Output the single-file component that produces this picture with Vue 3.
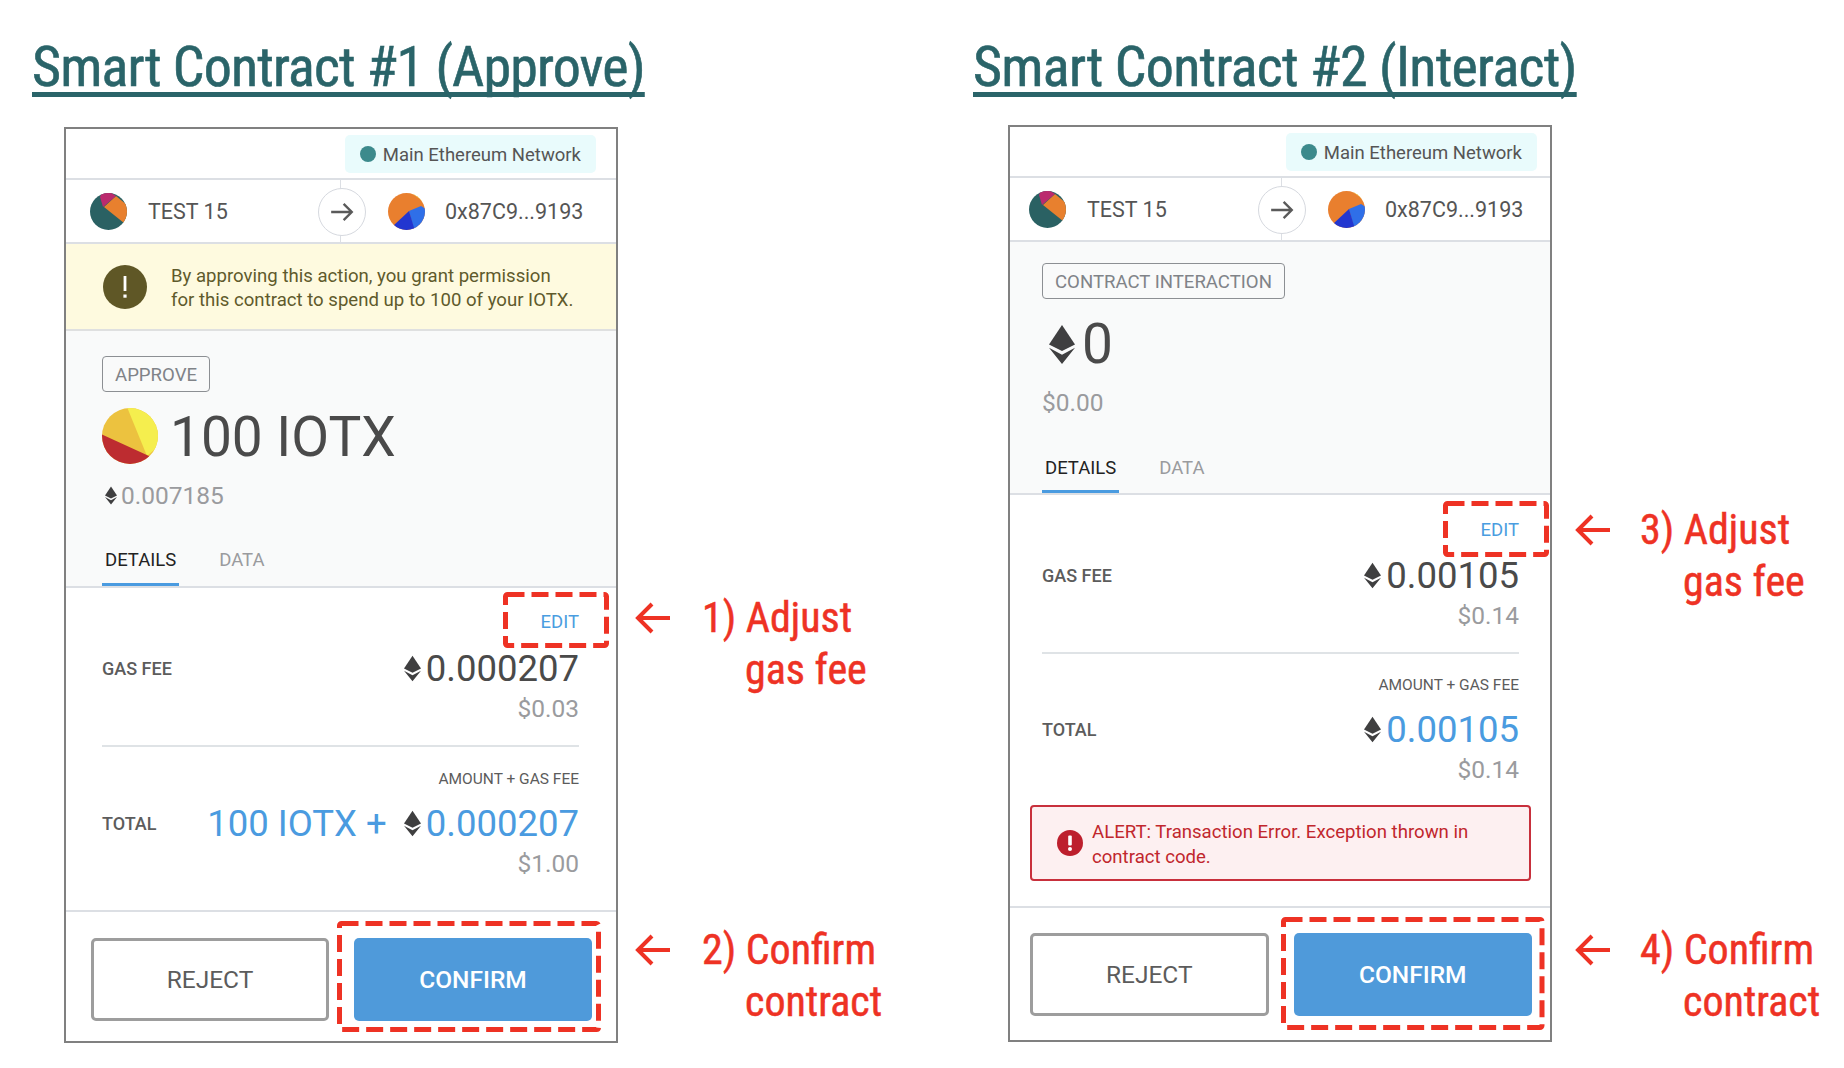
<template>
  <div class="page">
    <section v-for="c in cards" :key="c.id" class="col" :class="'col-' + c.id">
      <h1 class="heading">{{ c.heading }}</h1>

      <div class="card" :class="'card-' + c.id">
        <div class="net-row">
          <div class="net-pill"><span class="net-dot"></span>Main Ethereum Network</div>
        </div>

        <div class="acct-row">
          <svg class="avatar" viewBox="0 0 37 37">
            <defs><clipPath :id="'av1' + c.id"><circle cx="18.5" cy="18.5" r="18.5" /></clipPath></defs>
            <g :clip-path="`url(#av1${c.id})`">
              <rect width="37" height="37" fill="#2a6163" />
              <polygon points="14,14 26,3 37,12 37,25 34,30" fill="#e8802e" />
              <polygon points="10,4 13,14 26,3 20,-1 12,-1" fill="#bb2a6e" />
            </g>
          </svg>
          <span class="acct-name">TEST 15</span>
          <span class="arrow-btn">
            <svg viewBox="0 0 24 24" width="26" height="26" fill="none" stroke="#5a5a5a" stroke-width="2.2">
              <path d="M2 12h19M13.5 4.5 21 12l-7.5 7.5" />
            </svg>
          </span>
          <svg class="avatar avatar-to" viewBox="0 0 37 37">
            <defs><clipPath :id="'av2' + c.id"><circle cx="18.5" cy="18.5" r="18.5" /></clipPath></defs>
            <g :clip-path="`url(#av2${c.id})`">
              <rect width="37" height="37" fill="#e97f2e" />
              <polygon points="22,-1 37,-1 37,12 32,6" fill="#f2d53c" />
              <polygon points="21,18 33,13 38,16 38,26 30,37 26,37" fill="#2f6fe8" />
              <polygon points="5,33 21,18 27,38 12,38" fill="#2236d0" />
            </g>
          </svg>
          <span class="acct-addr">0x87C9...9193</span>
        </div>

        <div v-if="c.warning" class="banner">
          <svg class="banner-icon" viewBox="0 0 44 44">
            <circle cx="22" cy="22" r="22" fill="#5f5726" />
            <rect x="20.6" y="11" width="2.8" height="15" fill="#fff" />
            <rect x="20.4" y="29.5" width="3.2" height="3.2" fill="#fff" />
          </svg>
          <p class="banner-text">{{ c.warning[0] }}<br />{{ c.warning[1] }}</p>
        </div>

        <div class="summary">
          <span class="tag">{{ c.tag }}</span>
          <div class="amount">
            <svg v-if="c.token" class="token" viewBox="0 0 56 56">
              <defs><clipPath id="tok"><circle cx="28" cy="28" r="28" /></clipPath></defs>
              <g clip-path="url(#tok)">
                <rect width="56" height="56" fill="#ecc23f" />
                <polygon points="25,-1 45,48 57,38 57,-1" fill="#f5ee4e" />
                <polygon points="-1,26 47,48 47,57 -1,57" fill="#bd2c30" />
              </g>
            </svg>
            <svg v-else class="eth eth-big" viewBox="0 0 24 36">
              <path d="M12 0 24 18 12 24 0 18Z" /><path d="M0 21l12 6.5L24 21 12 36Z" />
            </svg>
            <span>{{ c.amount }}</span>
          </div>
          <div class="amount-sub">
            <svg v-if="c.token" class="eth eth-tiny" viewBox="0 0 24 36">
              <path d="M12 0 24 18 12 24 0 18Z" /><path d="M0 21l12 6.5L24 21 12 36Z" />
            </svg>{{ c.amountSub }}
          </div>
          <div class="tabs">
            <span class="tab tab-on">DETAILS</span>
            <span class="tab">DATA</span>
          </div>
        </div>

        <div class="details">
          <div class="edit-row">
            <span class="edit">EDIT</span>
            <svg class="dashed dashed-edit"><rect /></svg>
          </div>
          <div class="fee-row">
            <span class="fee-label">GAS FEE</span>
            <span class="fee-value">
              <svg class="eth" viewBox="0 0 24 36">
                <path d="M12 0 24 18 12 24 0 18Z" /><path d="M0 21l12 6.5L24 21 12 36Z" />
              </svg>{{ c.gas }}
            </span>
          </div>
          <div class="fiat">{{ c.gasFiat }}</div>
          <hr class="rule" />
          <div class="sum-label">AMOUNT + GAS FEE</div>
          <div class="fee-row total-row">
            <span class="fee-label">TOTAL</span>
            <span class="fee-value total-value">
              <span v-if="c.token" class="total-token">100 IOTX + </span>
              <svg class="eth" viewBox="0 0 24 36">
                <path d="M12 0 24 18 12 24 0 18Z" /><path d="M0 21l12 6.5L24 21 12 36Z" />
              </svg>{{ c.total }}
            </span>
          </div>
          <div class="fiat fiat-total">{{ c.totalFiat }}</div>

          <div v-if="c.alert" class="alert">
            <svg class="alert-icon" viewBox="0 0 26 26">
              <circle cx="13" cy="13" r="13" fill="#bd1f2d" />
              <rect x="11.2" y="5.5" width="3.6" height="10" rx="1" fill="#fff" />
              <circle cx="13" cy="19" r="2" fill="#fff" />
            </svg>
            <p>{{ c.alert[0] }}<br />{{ c.alert[1] }}</p>
          </div>
        </div>

        <div class="actions">
          <button class="btn btn-reject">REJECT</button>
          <div class="confirm-wrap">
            <button class="btn btn-confirm">CONFIRM</button>
            <svg class="dashed dashed-confirm"><rect /></svg>
          </div>
        </div>

        <div class="callout callout-gas">
          <svg class="callout-arrow" viewBox="0 0 36 32">
            <path d="M35 16H3M17 2 3 16l14 14" />
          </svg>
          <div class="callout-text">
            <div>{{ c.steps[0] }}) Adjust</div>
            <div class="callout-indent">gas fee</div>
          </div>
        </div>
        <div class="callout callout-confirm">
          <svg class="callout-arrow" viewBox="0 0 36 32">
            <path d="M35 16H3M17 2 3 16l14 14" />
          </svg>
          <div class="callout-text">
            <div>{{ c.steps[1] }}) Confirm</div>
            <div class="callout-indent">contract</div>
          </div>
        </div>
      </div>
    </section>
  </div>
</template>

<script setup>
const cards = [
  {
    id: 'a',
    heading: 'Smart Contract #1 (Approve)',
    warning: [
      'By approving this action, you grant permission',
      'for this contract to spend up to 100 of your IOTX.',
    ],
    tag: 'APPROVE',
    token: true,
    amount: '100 IOTX',
    amountSub: '0.007185',
    gas: '0.000207',
    gasFiat: '$0.03',
    total: '0.000207',
    totalFiat: '$1.00',
    steps: [1, 2],
  },
  {
    id: 'b',
    heading: 'Smart Contract #2 (Interact)',
    tag: 'CONTRACT INTERACTION',
    token: false,
    amount: '0',
    amountSub: '$0.00',
    gas: '0.00105',
    gasFiat: '$0.14',
    total: '0.00105',
    totalFiat: '$0.14',
    alert: ['ALERT: Transaction Error. Exception thrown in', 'contract code.'],
    steps: [3, 4],
  },
]
</script>

<style>
html, body { background: #fff; }
</style>

<style scoped>
.page {
  display: flex;
  width: 1844px;
  height: 1068px;
  overflow: hidden;
  background: #fff;
  font-family: Roboto, 'Liberation Sans', sans-serif;
}

.col { flex-shrink: 0; }
.col-a { width: 941px; padding-left: 32px; }
.col-b { width: 871px; }

.heading {
  margin: 0;
  font-family: 'Liberation Sans Narrow', 'Roboto Condensed', 'Liberation Sans', sans-serif;
  font-size: 56px;
  font-weight: 400;
  letter-spacing: -0.85px;
  line-height: 64px;
  padding-top: 35px;
  height: 99px;
  box-sizing: border-box;
  color: #2a6469;
  -webkit-text-stroke: 0.6px #2a6469;
  text-decoration: underline;
  text-decoration-thickness: 5px;
  text-decoration-skip-ink: none;
  text-underline-offset: 6px;
  white-space: nowrap;
}
.col-b .heading { letter-spacing: -0.7px; }

/* ─── Card ─────────────────────────────── */
.card {
  position: relative;
  display: flex;
  flex-direction: column;
  box-sizing: border-box;
  background: #fff;
  border: 2px solid #808080;
  color: #555;
}
.card-a { --pad-l: 36px; --pad-r: 37px; --foot-l: 25px; --foot-r: 24px; --body-h: 257px; width: 554px; height: 916px; margin: 28px 0 0 32px; }
.card-b { --pad-l: 32px; --pad-r: 31px; --foot-l: 20px; --foot-r: 18px; --body-h: 253px; width: 544px; height: 917px; margin: 26px 0 0 35px; }

.net-row {
  display: flex;
  justify-content: flex-end;
  align-items: center;
  height: 51px;
  box-sizing: border-box;
  padding: 1px 20px 0 0;
  border-bottom: 2px solid #dcdfe4;
}
.card-b .net-row { padding-right: 13px; }

.net-pill {
  display: flex;
  align-items: center;
  gap: 7px;
  height: 38px;
  box-sizing: border-box;
  padding: 2px 15px 0;
  border-radius: 5px;
  background: #e9fbfc;
  font-size: 18.5px;
  color: #555;
}
.net-dot { width: 16px; height: 16px; margin-top: -2px; border-radius: 50%; background: #3c8a8c; }

.acct-row {
  position: relative;
  display: flex;
  align-items: center;
  height: 64px;
  box-sizing: border-box;
  padding: 1px 0 0 24px;
  border-bottom: 2px solid #dcdfe4;
  font-size: 21.5px;
  color: #555;
}
.card-b .acct-row { padding-left: 19px; }
.acct-row::before {
  content: '';
  position: absolute;
  left: 274px;
  top: 0;
  bottom: 0;
  width: 1px;
  background: #dcdfe4;
}
.card-b .acct-row::before { left: 271px; }

.avatar { width: 37px; height: 37px; flex-shrink: 0; }
.acct-name { margin-left: 21px; width: 150px; white-space: nowrap; }
.arrow-btn {
  position: relative;
  display: flex;
  align-items: center;
  justify-content: center;
  width: 48px;
  height: 48px;
  margin-left: 20px;
  box-sizing: border-box;
  border: 1px solid #d6d9df;
  border-radius: 50%;
  background: #fff;
}
.avatar-to { margin-left: 22px; }
.acct-addr { margin-left: 20px; white-space: nowrap; }
.card-b .acct-name { margin-left: 21px; width: 171px; }
.card-b .arrow-btn { margin-left: 0; }

.banner {
  display: flex;
  align-items: center;
  gap: 24px;
  height: 87px;
  box-sizing: border-box;
  padding-left: 37px;
  background: #fefadf;
  border-bottom: 2px solid #dfe0e0;
}
.banner-icon { width: 44px; height: 44px; flex-shrink: 0; }
.banner-text {
  margin: 3px 0 0;
  font-size: 18.6px;
  line-height: 24.5px;
  color: #5f5a2c;
  white-space: nowrap;
}

/* ─── Amount block ─────────────────────── */
.summary {
  display: flex;
  flex-direction: column;
  align-items: flex-start;
  height: var(--body-h);
  flex-shrink: 0;
  box-sizing: border-box;
  padding: 25px var(--pad-r) 0 var(--pad-l);
  background: #f9fafa;
  border-bottom: 2px solid #dcdfe4;
}
.card-b .summary { padding-top: 21px; }

.tag {
  display: flex;
  align-items: center;
  height: 36px;
  box-sizing: border-box;
  padding: 1px 12px 0;
  border: 1.5px solid #8c8f93;
  border-radius: 4px;
  font-size: 18.6px;
  color: #808388;
  white-space: nowrap;
}
.amount {
  display: flex;
  align-items: center;
  gap: 12px;
  height: 56px;
  margin-top: 17px;
  font-size: 55px;
  color: #4a4a4a;
}
.token { width: 56px; height: 56px; margin-top: -2px; }
.amount-sub {
  display: flex;
  align-items: center;
  gap: 4px;
  height: 30px;
  margin-top: 15px;
  padding-left: 3px;
  font-size: 24.5px;
  color: #9a9b9e;
}
.card-b .amount-sub { padding-left: 0; }

.eth { width: 17px; height: 27px; fill: #3f3f40; flex-shrink: 0; }
.eth-big { width: 26px; height: 39px; margin-left: 7px; margin-right: -5px; }
.eth-tiny { width: 12px; height: 19px; }

.tabs {
  display: flex;
  gap: 37px;
  margin-top: auto;
}
.tab {
  padding: 0 3px;
  height: 38px;
  box-sizing: border-box;
  font-size: 18.5px;
  line-height: 24px;
  color: #9a9b9e;
}
.card-b .tab { height: 37px; }
.tab-on {
  color: #222;
  border-bottom: 3px solid #4a9be0;
}

/* ─── Details ──────────────────────────── */
.details {
  flex: 1;
  display: flex;
  flex-direction: column;
  padding: 20px var(--pad-r) 0 var(--pad-l);
}
.card-b .details { padding-top: 21px; }
.edit-row {
  position: relative;
  display: flex;
  justify-content: flex-end;
  height: 28px;
  line-height: 28px;
}
.edit { font-size: 18.5px; color: #4a9de0; }

.fee-row {
  display: flex;
  justify-content: space-between;
  align-items: center;
  height: 40px;
  margin-top: 12px;
}
.card-b .fee-row { margin-top: 11px; }
.fee-label { font-size: 18px; font-weight: 500; color: #5c5c5c; }
.fee-value {
  display: flex;
  align-items: center;
  gap: 5px;
  font-size: 36.5px;
  color: #4a4a4a;
  white-space: pre;
}
.total-value { color: #4a9be0; }
.total-token { margin-right: 3px; }

.fiat {
  height: 32px;
  margin-top: 5px;
  line-height: 32px;
  text-align: right;
  font-size: 24.5px;
  color: #9a9b9e;
}
.rule {
  width: 100%;
  height: 2px;
  margin: 20px 0 0;
  border: 0;
  background: #dfe3e6;
}
.sum-label {
  height: 20px;
  margin-top: 22px;
  line-height: 20px;
  text-align: right;
  font-size: 15.5px;
  color: #5c5c5c;
}
.card-b .sum-label { margin-top: 21px; }
.total-row { margin-top: 14px; }
.card-b .total-row { margin-top: 14px; }
.fiat-total { margin-top: 5px; }

.alert {
  display: flex;
  align-items: center;
  gap: 9px;
  height: 76px;
  margin: 19px -12px 0;
  box-sizing: border-box;
  padding-left: 25px;
  border: 2px solid #c8303c;
  border-radius: 4px;
  background: #fdf0f1;
  font-size: 18.6px;
  line-height: 24.5px;
  color: #c1272d;
}
.alert p { margin: 3px 0 0; white-space: nowrap; }
.alert-icon { width: 26px; height: 26px; flex-shrink: 0; }

.actions {
  display: grid;
  grid-template-columns: 1fr 1fr;
  align-items: start;
  gap: 25px;
  height: 131px;
  flex-shrink: 0;
  box-sizing: border-box;
  padding: 26px var(--foot-r) 0 var(--foot-l);
  border-top: 2px solid #dcdfe4;
}
.card-b .actions { height: 134px; padding-top: 25px; }

.btn {
  display: block;
  width: 100%;
  height: 83px;
  box-sizing: border-box;
  padding: 0;
  border-radius: 5px;
  font-family: inherit;
  font-size: 24.5px;
}
.btn-reject {
  background: #fff;
  border: 3px solid #9d9d9d;
  color: #5c5c5c;
}
.confirm-wrap { position: relative; }
.btn-confirm {
  border: 0;
  background: #4f9ada;
  color: #fff;
  font-weight: 500;
}

/* ─── Red annotations ──────────────────── */
.dashed {
  position: absolute;
  overflow: visible;
  pointer-events: none;
}
.dashed rect {
  x: 2.5px;
  y: 2.5px;
  width: calc(100% - 5px);
  height: calc(100% - 5px);
  rx: 2px;
  fill: none;
  stroke: #ee3224;
  stroke-width: 5px;
  stroke-dasharray: 17 7;
}
.dashed-edit { width: 106px; height: 56px; top: -16px; right: -30px; }
.card-b .dashed-edit { top: -15px; }
.dashed-confirm { top: -17px; left: -17px; width: calc(100% + 26px); height: calc(100% + 28px); }
.card-b .dashed-confirm { top: -16px; left: -13px; width: calc(100% + 25px); height: calc(100% + 30px); }

.callout {
  position: absolute;
  display: flex;
  gap: 31px;
  font-family: 'Liberation Sans Narrow', 'Roboto Condensed', 'Liberation Sans', sans-serif;
  font-size: 42px;
  line-height: 52px;
  color: #ee3224;
  -webkit-text-stroke: 0.5px #ee3224;
  white-space: nowrap;
}
.card-b .callout { gap: 29px; }
.callout-arrow {
  width: 36px;
  height: 32px;
  margin-top: 10px;
  fill: none;
  stroke: #ee3224;
  stroke-width: 4;
  flex-shrink: 0;
}
.callout-indent { padding-left: 43px; }

.card-a .callout { left: calc(100% + 19px); }
.card-b .callout { left: calc(100% + 25px); }
.card-a .callout-gas { top: 463px; }
.card-a .callout-confirm { top: 795px; }
.card-b .callout-gas { top: 377px; }
.card-b .callout-confirm { top: 797px; }
</style>
